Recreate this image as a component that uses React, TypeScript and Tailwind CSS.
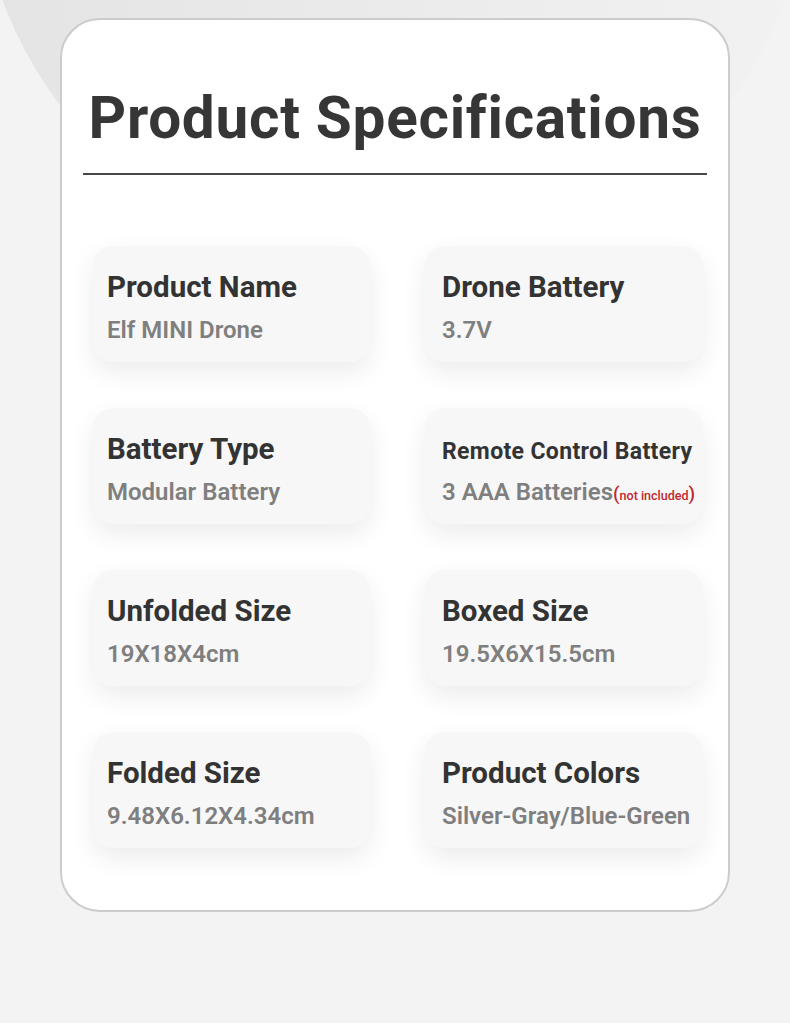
const specs = [
  { label: 'Product Name', value: 'Elf MINI Drone' },
  { label: 'Drone Battery', value: '3.7V' },
  { label: 'Battery Type', value: 'Modular Battery' },
  { label: 'Remote Control Battery', value: '3 AAA Batteries', note: true },
  { label: 'Unfolded Size', value: '19X18X4cm' },
  { label: 'Boxed Size', value: '19.5X6X15.5cm' },
  { label: 'Folded Size', value: '9.48X6.12X4.34cm' },
  { label: 'Product Colors', value: 'Silver-Gray/Blue-Green' },
];

function SpecCard({ label, value, note, right }: { label: string; value: string; note?: boolean; right?: boolean }) {
  return (
    <div className={`h-[116px] rounded-[20px] bg-[#f7f7f7] shadow-[0_10px_26px_rgba(0,0,0,0.08)] pr-1 ${right ? 'pl-[17px]' : 'pl-[14px]'} ${note ? 'pt-[32px]' : 'pt-[27px]'}`}>
      <div className={`font-bold text-[#333] leading-none whitespace-nowrap ${note ? 'text-[23px] tracking-[0.35px]' : 'text-[29.5px]'}`}>{label}</div>
      <div className={`text-[24px] font-semibold text-[#7f7f7f] leading-none whitespace-nowrap ${note ? 'mt-[17px]' : 'mt-[16px]'}`}>
        {value}
        {note && (
          <span className="text-[#c1272d] font-medium">
            <span className="text-[19px]">(</span>
            <span className="text-[12.5px]">not included</span>
            <span className="text-[19px]">)</span>
          </span>
        )}
      </div>
    </div>
  );
}

export default function App() {
  return (
    <div className="relative w-[790px] h-[1023px] overflow-hidden bg-[#f3f3f3]" style={{ fontFamily: 'Roboto, "Liberation Sans", sans-serif' }}>
      {/* backdrop circle */}
      <div className="absolute left-[-24px] top-[-564px] w-[836px] h-[836px] rounded-full bg-gradient-to-r from-[#e4e4e4] to-[#f2f2f2]" />

      <div className="relative pt-[18px] px-[60px]">
        <div className="h-[894px] bg-white rounded-[40px] border-2 border-[#cccccc]">
          <h1 className="mt-[69px] text-center text-[58.5px] font-bold text-[#363636] leading-none tracking-[0.7px]">
            Product Specifications
          </h1>
          <div className="mt-[25px] mx-[21px] h-[2px] bg-[#474747]" />

          <div className="mt-[71px] ml-[31px] mr-[25px] grid grid-cols-[277px_278px] gap-x-[55px] gap-y-[46px]">
            {specs.map((s, i) => (
              <SpecCard key={s.label} {...s} right={i % 2 === 1} />
            ))}
          </div>
        </div>
      </div>
    </div>
  );
}
